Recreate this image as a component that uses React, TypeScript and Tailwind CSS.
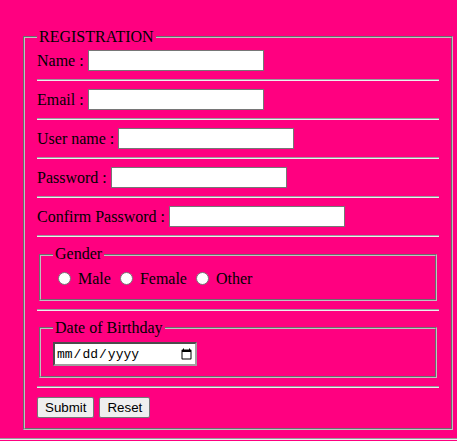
import React from 'react'

const serif = { fontFamily: '"Liberation Serif", "Times New Roman", serif' }

const fields = [
  { label: 'Name :', type: 'text' },
  { label: 'Email :', type: 'email' },
  { label: 'User name :', type: 'text' },
  { label: 'Password :', type: 'password' },
  { label: 'Confirm Password :', type: 'password' },
]

function Rule({ full }: { full?: boolean }) {
  return (
    <div
      className={
        'h-[2px] border-t border-b border-t-[#9a9a9a] border-b-[#eeeeee] ' +
        (full ? 'w-full' : 'my-2')
      }
    />
  )
}

function Radio({ label }: { label: string }) {
  return (
    <label className="flex items-start">
      <input
        type="radio"
        name="gender"
        className="appearance-none w-[13px] h-[13px] mt-[2px] rounded-full bg-white border border-[#767676] ml-[5px] mr-[7px]"
      />
      <span className="mr-[4px]">{label}</span>
    </label>
  )
}

export default function App() {
  return (
    <div className="min-h-[441px] bg-[#ff0080] text-black text-[16px] leading-[1.15]" style={serif}>
      <form className="pt-[28px]">
        <fieldset className="ml-[23px] w-[430px] border-2 [border-style:groove] border-[#c0c0c0] px-3 pt-[4px] pb-[10px]">
          <legend className="px-[2px]">REGISTRATION</legend>

          {fields.map((f) => (
            <div key={f.label}>
              <div className="flex items-center h-[21px] gap-[4px]">
                <span>{f.label}</span>
                <input
                  type={f.type}
                  className="w-[176px] h-[21px] bg-white border border-[#767676] px-[2px]"
                />
              </div>
              <Rule />
            </div>
          ))}

          <fieldset className="mx-[2px] border-2 [border-style:groove] border-[#c0c0c0] px-3 pt-[6px] pb-[10px]">
            <legend className="px-[2px]">Gender</legend>
            <div className="flex items-start h-[19px]">
              <Radio label="Male" />
              <Radio label="Female" />
              <Radio label="Other" />
            </div>
          </fieldset>

          <Rule />

          <fieldset className="mx-[2px] border-2 [border-style:groove] border-[#c0c0c0] px-3 pt-[5px] pb-[10px]">
            <legend className="px-[2px]">Date of Birthday</legend>
            <input
              type="date"
              className="block w-[144px] h-[24px] bg-white border-2 [border-style:inset] border-[#a0a0a0] pl-[1px] text-[13px] leading-none"
              style={{ fontFamily: '"Liberation Mono", "Courier New", monospace' }}
            />
          </fieldset>

          <Rule />

          <div
            className="flex gap-[5px] pt-[1px] text-[13.33px]"
            style={{ fontFamily: '"Liberation Sans", Arial, sans-serif' }}
          >
            <button type="submit" className="h-[21px] px-[7px] bg-[#efefef] border border-[#767676] rounded-[2px]">
              Submit
            </button>
            <button type="reset" className="h-[21px] px-[7px] bg-[#efefef] border border-[#767676] rounded-[2px]">
              Reset
            </button>
          </div>
        </fieldset>
        <div className="mt-2">
          <Rule full />
        </div>
      </form>
    </div>
  )
}
